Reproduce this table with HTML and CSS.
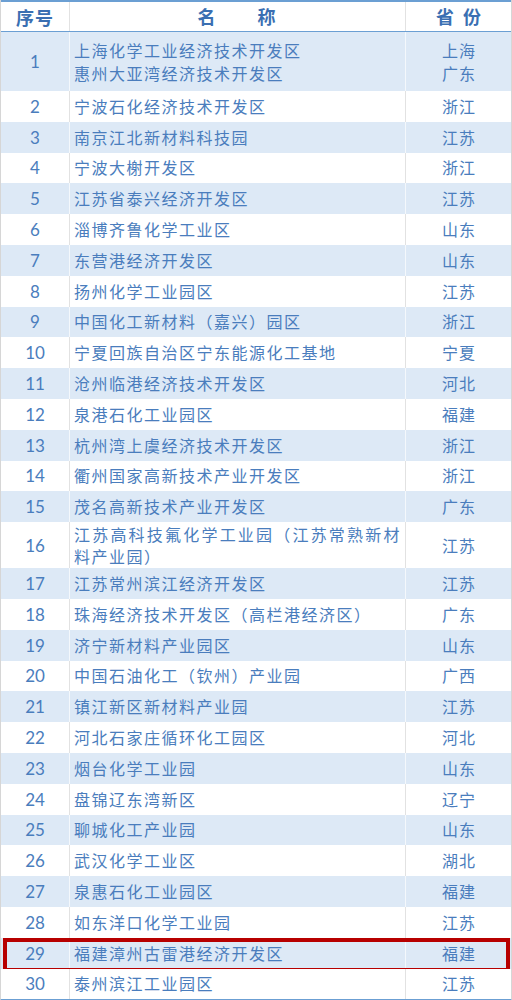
FILE: index.html
```html
<!DOCTYPE html>
<html lang="zh-CN">
<head>
<meta charset="utf-8">
<link rel="stylesheet" href="styles.css">
</head>
<body>
<div class="table">
  <div class="row head">
    <div class="c1">序号</div>
    <div class="c2">名　　称</div>
    <div class="c3">省&nbsp;份</div>
  </div>
  <div class="row alt tall"><div class="c1">1</div><div class="c2">上海化学工业经济技术开发区<br>惠州大亚湾经济技术开发区</div><div class="c3">上海<br>广东</div></div>
  <div class="row"><div class="c1">2</div><div class="c2">宁波石化经济技术开发区</div><div class="c3">浙江</div></div>
  <div class="row alt"><div class="c1">3</div><div class="c2">南京江北新材料科技园</div><div class="c3">江苏</div></div>
  <div class="row"><div class="c1">4</div><div class="c2">宁波大榭开发区</div><div class="c3">浙江</div></div>
  <div class="row alt"><div class="c1">5</div><div class="c2">江苏省泰兴经济开发区</div><div class="c3">江苏</div></div>
  <div class="row"><div class="c1">6</div><div class="c2">淄博齐鲁化学工业区</div><div class="c3">山东</div></div>
  <div class="row alt"><div class="c1">7</div><div class="c2">东营港经济开发区</div><div class="c3">山东</div></div>
  <div class="row"><div class="c1">8</div><div class="c2">扬州化学工业园区</div><div class="c3">江苏</div></div>
  <div class="row alt"><div class="c1">9</div><div class="c2">中国化工新材料（嘉兴）园区</div><div class="c3">浙江</div></div>
  <div class="row"><div class="c1">10</div><div class="c2">宁夏回族自治区宁东能源化工基地</div><div class="c3">宁夏</div></div>
  <div class="row alt"><div class="c1">11</div><div class="c2">沧州临港经济技术开发区</div><div class="c3">河北</div></div>
  <div class="row"><div class="c1">12</div><div class="c2">泉港石化工业园区</div><div class="c3">福建</div></div>
  <div class="row alt"><div class="c1">13</div><div class="c2">杭州湾上虞经济技术开发区</div><div class="c3">浙江</div></div>
  <div class="row"><div class="c1">14</div><div class="c2">衢州国家高新技术产业开发区</div><div class="c3">浙江</div></div>
  <div class="row alt"><div class="c1">15</div><div class="c2">茂名高新技术产业开发区</div><div class="c3">广东</div></div>
  <div class="row mid"><div class="c1">16</div><div class="c2"><div class="wrap">江苏高科技氟化学工业园（江苏常熟新材料产业园）</div></div><div class="c3">江苏</div></div>
  <div class="row alt"><div class="c1">17</div><div class="c2">江苏常州滨江经济开发区</div><div class="c3">江苏</div></div>
  <div class="row"><div class="c1">18</div><div class="c2">珠海经济技术开发区（高栏港经济区）</div><div class="c3">广东</div></div>
  <div class="row alt"><div class="c1">19</div><div class="c2">济宁新材料产业园区</div><div class="c3">山东</div></div>
  <div class="row"><div class="c1">20</div><div class="c2">中国石油化工（钦州）产业园</div><div class="c3">广西</div></div>
  <div class="row alt"><div class="c1">21</div><div class="c2">镇江新区新材料产业园</div><div class="c3">江苏</div></div>
  <div class="row"><div class="c1">22</div><div class="c2">河北石家庄循环化工园区</div><div class="c3">河北</div></div>
  <div class="row alt"><div class="c1">23</div><div class="c2">烟台化学工业园</div><div class="c3">山东</div></div>
  <div class="row"><div class="c1">24</div><div class="c2">盘锦辽东湾新区</div><div class="c3">辽宁</div></div>
  <div class="row alt"><div class="c1">25</div><div class="c2">聊城化工产业园</div><div class="c3">山东</div></div>
  <div class="row"><div class="c1">26</div><div class="c2">武汉化学工业区</div><div class="c3">湖北</div></div>
  <div class="row alt"><div class="c1">27</div><div class="c2">泉惠石化工业园区</div><div class="c3">福建</div></div>
  <div class="row"><div class="c1">28</div><div class="c2">如东洋口化学工业园</div><div class="c3">江苏</div></div>
  <div class="row alt marked"><div class="c1">29</div><div class="c2">福建漳州古雷港经济开发区</div><div class="c3">福建</div></div>
  <div class="row"><div class="c1">30</div><div class="c2">泰州滨江工业园区</div><div class="c3">江苏</div></div>
</div>
</body>
</html>
```

FILE: styles.css
```css
html, body {
  margin: 0;
  padding: 0;
  background: #ffffff;
}

.table {
  width: 512px;
  box-sizing: border-box;
  border-left: 1px solid #d6d6d6;
  border-right: 1px solid #d6d6d6;
  border-bottom: 2px solid #6b9fd3;
  font-family: "Noto Sans CJK SC", "Noto Sans", sans-serif;
  color: #4a7dbd;
}

.row {
  display: grid;
  grid-template-columns: 69px 336px 1fr;
  height: 30.8px;
  box-sizing: border-box;
  background: #ffffff;
  position: relative;
}

.row > div {
  display: flex;
  align-items: center;
  box-sizing: border-box;
}

.row > .c1,
.row > .c2 {
  border-right: 1px solid #e2e2e2;
}

.row.alt {
  background: #dde9f6;
}

.row.alt > .c1,
.row.alt > .c2 {
  border-right-color: #f4f8fc;
}

.c1 {
  justify-content: center;
  font-family: "Lato", "Liberation Sans", sans-serif;
  font-size: 17px;
}

.c2 {
  padding-left: 4px;
  padding-right: 4px;
  font-size: 16px;
  letter-spacing: 1.5px;
  line-height: 23px;
}

.c3 {
  justify-content: center;
  text-align: center;
  font-size: 16px;
  letter-spacing: 1px;
  line-height: 23px;
  padding-left: 1px;
}

.row.head {
  height: 32px;
  border-top: 2px solid #6b9fd3;
  border-bottom: 1px solid #6b9fd3;
  color: #3a6fb2;
  font-weight: bold;
}

.row.head > div {
  font-family: "Noto Sans CJK SC", sans-serif;
  font-size: 18px;
  letter-spacing: 1px;
}

.row.head > .c2 {
  justify-content: center;
  padding: 0;
  letter-spacing: 2px;
}

.row.head > .c3 {
  word-spacing: 3px;
}

.row.tall {
  height: 59px;
}

.row.mid {
  height: 46px;
}

.wrap {
  width: 100%;
  text-align: justify;
  text-align-last: left;
  line-height: 22px;
}

.row.marked::after {
  content: "";
  position: absolute;
  left: 2px;
  right: 1px;
  top: 0;
  bottom: -3px;
  border: 4px solid #b70000;
  pointer-events: none;
}
```
